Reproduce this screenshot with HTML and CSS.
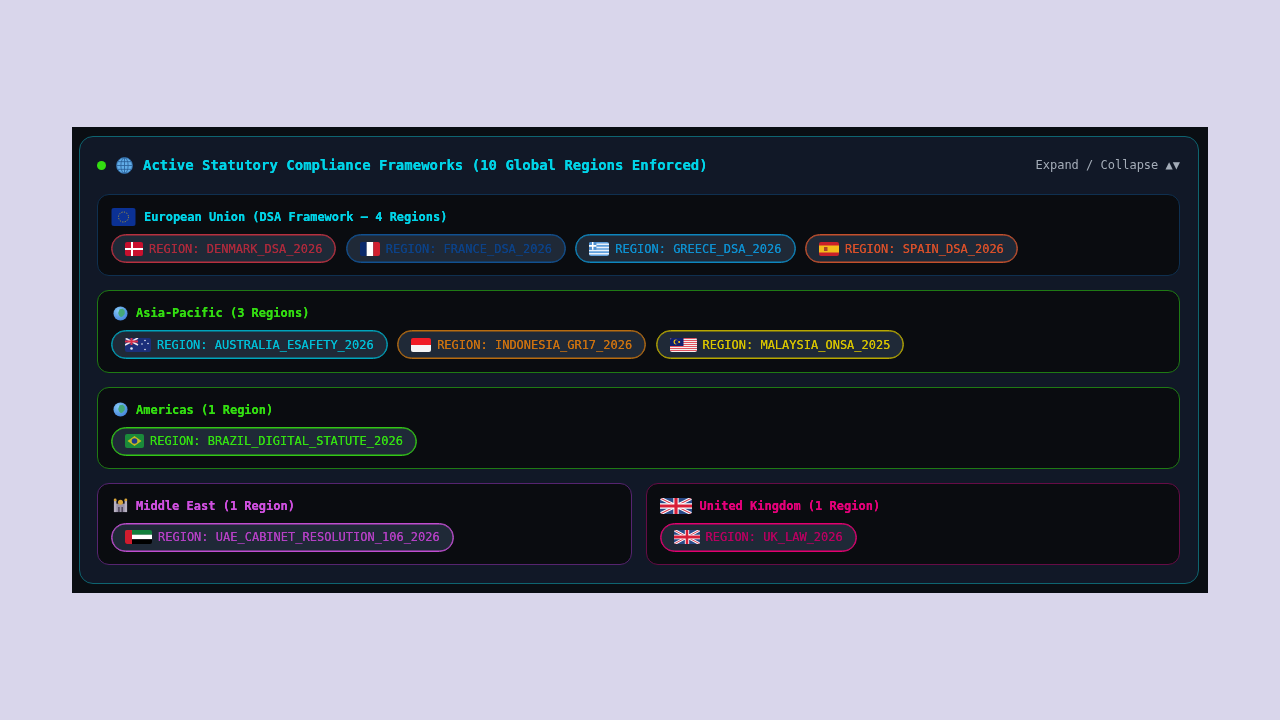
FILE: index.html
```html
<!DOCTYPE html>
<html lang="en">
<head>
<meta charset="utf-8">
<title>Compliance Frameworks</title>
<link rel="stylesheet" href="styles.css">
</head>
<body>
<svg class="defs" width="0" height="0" aria-hidden="true">
  <defs>
    <symbol id="uk" viewBox="0 0 60 30" preserveAspectRatio="none">
      <rect width="60" height="30" fill="#2a4a88"/>
      <path d="M0 0L60 30M60 0L0 30" stroke="#fff" stroke-width="6"/>
      <path d="M0 0L60 30M60 0L0 30" stroke="#d83048" stroke-width="2"/>
      <path d="M30 0V30M0 15H60" stroke="#fff" stroke-width="10"/>
      <path d="M30 0V30M0 15H60" stroke="#d81e38" stroke-width="6"/>
    </symbol>
    <radialGradient id="sea" cx=".35" cy=".3" r=".8">
      <stop offset="0" stop-color="#86c8f8"/>
      <stop offset="1" stop-color="#3f7fd8"/>
    </radialGradient>
    <symbol id="earth" viewBox="0 0 16 16">
      <circle cx="8" cy="8" r="7.5" fill="url(#sea)"/>
      <path d="M7 3.5L10.5 3 12.5 5 12.5 8.5 10.5 11 8.5 12 6.5 10 5.5 7.5Z" fill="#45a878"/>
    </symbol>
  </defs>
</svg>
<main class="frame">
  <section class="panel">
    <header class="panel-head">
      <div class="title-wrap">
        <span class="dot"></span>
        <svg class="globe" viewBox="0 0 16 16" aria-hidden="true">
          <circle cx="8" cy="8" r="7.6" fill="#62ade8"/>
          <g fill="none" stroke="#2a6199" stroke-width=".8">
            <circle cx="8" cy="8" r="7.5"/>
            <ellipse cx="8" cy="8" rx="3.4" ry="7.4"/>
            <path d="M8 .6V15.4M.8 8H15.2M1.8 4.4H14.2M1.8 11.6H14.2"/>
          </g>
        </svg>
        <h1 class="title">Active Statutory Compliance Frameworks (10 Global Regions Enforced)</h1>
      </div>
      <span class="toggle">Expand / Collapse ▲▼</span>
    </header>

    <div class="groups">
      <article class="group g-eu">
        <h2 class="group-label">
          <svg class="lbl-flag eu" viewBox="0 0 24 18" aria-hidden="true">
            <rect width="24" height="18" fill="#0b3194"/>
            <circle cx="12" cy="9" r="5" fill="none" stroke="#a8963a" stroke-width="1" stroke-dasharray="1.2 1.4"/>
          </svg>
          European Union (DSA Framework — 4 Regions)
        </h2>
        <div class="pills">
          <span class="pill p-dk">
            <svg class="flag" width="18" height="14" viewBox="0 0 18 14" aria-hidden="true"><rect width="18" height="14" fill="#c8102e"/><path d="M7 0V14M0 7H18" stroke="#fff" stroke-width="2"/></svg>
            REGION: DENMARK_DSA_2026
          </span>
          <span class="pill p-fr">
            <svg class="flag" width="20" height="14" viewBox="0 0 3 2" preserveAspectRatio="none" aria-hidden="true"><rect width="1" height="2" fill="#0a2a6b"/><rect x="1" width="1" height="2" fill="#fff"/><rect x="2" width="1" height="2" fill="#d0202e"/></svg>
            REGION: FRANCE_DSA_2026
          </span>
          <span class="pill p-gr">
            <svg class="flag" width="20" height="14" viewBox="0 0 27 18" preserveAspectRatio="none" aria-hidden="true"><rect width="27" height="18" fill="#5f9fdc"/><path d="M0 3H27M0 7H27M0 11H27M0 15H27" stroke="#e8f0fa" stroke-width="2"/><rect width="10" height="10" fill="#4d8fd0"/><path d="M5 0V10M0 5H10" stroke="#fff" stroke-width="2"/></svg>
            REGION: GREECE_DSA_2026
          </span>
          <span class="pill p-es">
            <svg class="flag" width="20" height="14" viewBox="0 0 20 14" aria-hidden="true"><rect width="20" height="14" fill="#c8202a"/><rect y="3.5" width="20" height="7" fill="#f3bb1a"/><rect x="5" y="5" width="3.5" height="4" fill="#a8452a"/></svg>
            REGION: SPAIN_DSA_2026
          </span>
        </div>
      </article>

      <article class="group g-green">
        <h2 class="group-label"><svg class="emoji" aria-hidden="true"><use href="#earth"/></svg>Asia-Pacific (3 Regions)</h2>
        <div class="pills">
          <span class="pill p-au">
            <svg class="flag" width="26" height="14" viewBox="0 0 26 14" aria-hidden="true"><rect width="26" height="14" fill="#1b2f7a"/><g><path d="M0 0L13 7M13 0L0 7" stroke="#f1e6ea" stroke-width="1.6"/><path d="M6.5 0V7M0 3.5H13" stroke="#d8304a" stroke-width="2"/></g><g fill="#e8ecf8"><circle cx="6.5" cy="10.5" r="1.3"/><circle cx="20" cy="2.5" r=".8"/><circle cx="17" cy="6" r=".8"/><circle cx="23" cy="5.5" r=".8"/><circle cx="20" cy="11.5" r=".8"/></g></svg>
            REGION: AUSTRALIA_ESAFETY_2026
          </span>
          <span class="pill p-id">
            <svg class="flag" width="20" height="14" viewBox="0 0 20 14" aria-hidden="true"><rect width="20" height="7" fill="#f01c25"/><rect y="7" width="20" height="7" fill="#f5f5f5"/></svg>
            REGION: INDONESIA_GR17_2026
          </span>
          <span class="pill p-my">
            <svg class="flag" width="27" height="14" viewBox="0 0 28 14" preserveAspectRatio="none" aria-hidden="true"><rect width="28" height="14" fill="#f4f0f0"/><path d="M0 .5H28M0 2.5H28M0 4.5H28M0 6.5H28M0 8.5H28M0 10.5H28M0 12.5H28" stroke="#e0505c" stroke-width="1"/><rect width="14" height="8" fill="#10206e"/><circle cx="6" cy="4" r="2.4" fill="#f5c518"/><circle cx="7" cy="4" r="2.1" fill="#10206e"/><circle cx="9.5" cy="4" r="1.1" fill="#f5c518"/></svg>
            REGION: MALAYSIA_ONSA_2025
          </span>
        </div>
      </article>

      <article class="group g-green">
        <h2 class="group-label"><svg class="emoji" aria-hidden="true"><use href="#earth"/></svg>Americas (1 Region)</h2>
        <div class="pills">
          <span class="pill p-br">
            <svg class="flag" width="19" height="14" viewBox="0 0 19 14" aria-hidden="true"><rect width="19" height="14" fill="#1a8a3a"/><path d="M9.5 2L16.5 7 9.5 12 2.5 7Z" fill="#c8b820"/><circle cx="9.5" cy="7" r="2.8" fill="#1f3a8a"/></svg>
            REGION: BRAZIL_DIGITAL_STATUTE_2026
          </span>
        </div>
      </article>

      <div class="row">
        <article class="group g-me">
          <h2 class="group-label">
            <svg class="emoji" viewBox="0 0 16 16" aria-hidden="true"><rect x="1" y="6" width="14" height="9" fill="#9a93a8"/><path d="M5.5 9.5h1.6V15H5.5zM9 9.5h1.6V15H9z" fill="#4c4458"/><rect x="1" y="2" width="2.6" height="13" fill="#b8b2c2"/><rect x="12.4" y="2" width="2.6" height="13" fill="#b8b2c2"/><circle cx="2.3" cy="2" r="1.5" fill="#d9a63a"/><circle cx="13.7" cy="2" r="1.5" fill="#d9a63a"/><circle cx="8" cy="4.6" r="2.7" fill="#d9a63a"/></svg>
            Middle East (1 Region)
          </h2>
          <div class="pills">
            <span class="pill p-ae">
              <svg class="flag" width="27" height="14" viewBox="0 0 27 14" aria-hidden="true"><rect width="27" height="4.7" fill="#12803c"/><rect y="4.7" width="27" height="4.6" fill="#fff"/><rect y="9.3" width="27" height="4.7" fill="#000"/><rect width="7" height="14" fill="#d01c2e"/></svg>
              REGION: UAE_CABINET_RESOLUTION_106_2026
            </span>
          </div>
        </article>
        <article class="group g-uk">
          <h2 class="group-label">
            <svg class="lbl-flag ukf" aria-hidden="true"><use href="#uk"/></svg>
            United Kingdom (1 Region)
          </h2>
          <div class="pills">
            <span class="pill p-uk">
              <svg class="flag" width="26" height="14" aria-hidden="true"><use href="#uk"/></svg>
              REGION: UK_LAW_2026
            </span>
          </div>
        </article>
      </div>
    </div>
  </section>
</main>
</body>
</html>
```
FILE: styles.css
```css
* { box-sizing: border-box; }
html, body { height: 100%; }
body {
  margin: 0;
  background: #d9d6eb;
  display: flex;
  align-items: center;
  justify-content: center;
  font-family: "DejaVu Sans Mono", monospace;
  font-size: 12px;
}
.defs { display: block; width: 0; height: 0; position: absolute; }
.frame {
  width: 1136px;
  height: 466px;
  padding: 9px 9px 9px 7px;
  background: #0a0e13;
  filter: blur(0.5px);
}
.panel {
  height: 448px;
  padding: 18px 18px 18px 17px;
  background: #111827;
  border: 1px solid #0e6470;
  border-radius: 14px;
}
.panel-head {
  display: flex;
  align-items: center;
  justify-content: space-between;
  height: 20px;
  margin-bottom: 19px;
}
.title-wrap { display: flex; align-items: center; }
.dot {
  width: 9px;
  height: 9px;
  border-radius: 50%;
  background: #33dd11;
  margin-right: 10px;
}
.globe { width: 17px; height: 17px; margin-right: 10px; }
.title {
  margin: 0;
  font-size: 14px;
  font-weight: 700;
  color: #00d4e8;
  text-shadow: 0 0 .5px currentColor;
}
.toggle { color: #a4acb8; font-size: 12px; }
.groups { display: flex; flex-direction: column; gap: 14px; }
.row { display: grid; grid-template-columns: 1fr 1fr; gap: 14px; }
.group {
  height: 82.33px;
  padding: 13px 13px 12px;
  background: #0a0c10;
  border: 1px solid;
  border-radius: 12px;
  display: flex;
  flex-direction: column;
  gap: 8px;
}
.g-eu { border-color: #0f3050; }
.g-green { border-color: #1f7a14; }
.g-me { border-color: #562470; }
.g-uk { border-color: #660c46; }
.group-label {
  margin: 0;
  display: flex;
  align-items: center;
  height: 18px;
  font-size: 12px;
  font-weight: 700;
  text-shadow: 0 0 .5px currentColor;
}
.g-eu .group-label { color: #00d4e8; }
.g-green .group-label { color: #33dd11; }
.g-me .group-label { color: #d050e0; }
.g-uk .group-label { color: #e6007a; }
.emoji { width: 15px; height: 15px; margin: 0 8px 0 2px; flex: none; }
.lbl-flag { border-radius: 3px; flex: none; }
.eu { width: 25px; height: 18px; margin-right: 8px; }
.ukf { width: 32px; height: 16px; margin-right: 8px; }
.pills { display: flex; gap: 9.4px; }
.pill {
  display: inline-flex;
  align-items: center;
  gap: 6px;
  height: 29px;
  padding: 0 13px;
  border: 1px solid;
  border-radius: 15px;
  background: #1f2937;
  white-space: nowrap;
  text-shadow: 0 0 .4px currentColor;
  box-shadow: inset 0 0 0 .5px var(--edge);
}
.flag { border-radius: 2px; flex: none; }
.p-dk { color: #ac2a3c; border-color: #b8303f; --edge: #b8303f; }
.p-fr { color: #0c4288; border-color: #115090; --edge: #115090; }
.p-gr { color: #0e90d0; border-color: #0e86be; --edge: #0e86be; }
.p-es { color: #d8502a; border-color: #c4502c; --edge: #c4502c; }
.p-au { color: #00bed6; border-color: #00a4bc; --edge: #00a4bc; }
.p-id { color: #cc7210; border-color: #b86c10; --edge: #b86c10; }
.p-my { color: #d8c400; border-color: #b8a800; --edge: #b8a800; }
.p-br { color: #34e012; border-color: #33c816; --edge: #33c816; }
.p-ae { color: #b440c4; border-color: #c04ed0; --edge: #c04ed0; }
.p-uk { color: #b80060; border-color: #e40070; --edge: #e40070; }
```
